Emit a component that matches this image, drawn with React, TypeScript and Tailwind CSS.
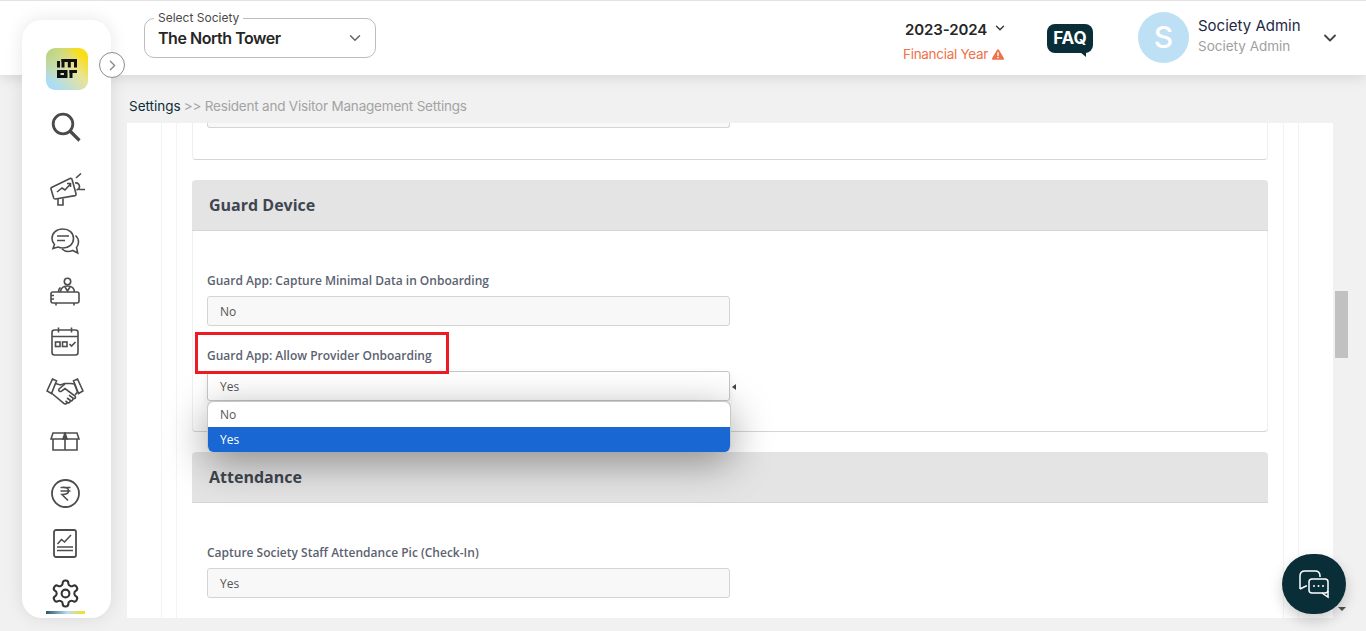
import { ChevronDown, ChevronRight } from "lucide-react";

const navIconClass = "fill-none stroke-[#4d4d4d] stroke-[1.6]";

function Logo() {
  return (
    <div className="flex h-[42px] w-[42px] items-center justify-center rounded-[9px] bg-[radial-gradient(circle_at_top_left,#b5d27d,transparent_55%),linear-gradient(45deg,#a9dcf8_12%,#e8e49a_58%,#f9de17_85%)]">
      <svg width="22" height="22" viewBox="0 0 22 22" fill="#111" fillRule="evenodd">
        <rect x="1" y="3" width="3" height="6.500" />
        <rect x="5.500" y="1" width="15.500" height="3" />
        <rect x="5.500" y="1" width="3" height="8.500" />
        <rect x="11.800" y="1" width="3" height="8.500" />
        <rect x="18" y="1" width="3" height="8.500" />
        <path d="M1 12h10.500v8H1zM4.500 15v2h3.500v-2z" />
        <rect x="13.500" y="12" width="7.500" height="3" />
        <rect x="13.500" y="12" width="3" height="8" />
      </svg>
    </div>
  );
}

function SearchIcon() {
  return (
    <svg width="30" height="30" viewBox="0 0 30 30" fill="none" stroke="#4a4a4a">
      <circle cx="12" cy="12" r="9.800" strokeWidth="2.800" />
      <path d="M19 19l9.500 9.500" strokeWidth="3.200" />
    </svg>
  );
}

function CampaignIcon() {
  return (
    <svg width="35" height="33" viewBox="0 0 35 33" className={navIconClass}>
      <path d="M1.500 14.500L20 5.500c1-.4 1.800 0 2 .8l4 14.500c.2 1-.2 1.600-1 1.800L5.500 26c-1 .2-1.400-.2-1.800-1L1 16c-.2-.7 0-1.200.5-1.500z" />
      <path d="M7 19l5-4 3 2 5-5.500M17 10.500h3.500v3.500" />
      <path d="M8 26v6h5v-6.500M25 10c3-.5 4.500 1.500 4.500 3.500s-1 3-3 3.500" />
      <path d="M26 5l5-4.500M29 16.500h6" />
    </svg>
  );
}

function ChatIcon() {
  return (
    <svg width="29" height="27" viewBox="0 0 29 27" className={navIconClass}>
      <path d="M12 1C5.500 1 1 5 1 10.500c0 2.500 1 4.500 2.500 6L2 20.500l5-1.500c1.500.7 3.200 1 5 1 6 0 10.500-4 10.500-9.500S18 1 12 1z" />
      <path d="M6 8h12M6 12.500h8" />
      <path d="M24.500 7.500c2 1.700 3 3.800 3 6.500 0 2-.7 4-2 5.500l1.200 5.500-5-2.500c-3.500 1.500-8 1-10.700-1.500" />
    </svg>
  );
}

function DeskIcon() {
  return (
    <svg width="30" height="29" viewBox="0 0 30 29" className={navIconClass}>
      <circle cx="17.500" cy="4.500" r="3.200" />
      <path d="M10.500 15c.3-4 3-6 7-6s6.700 2 7 6M15 10l2.500 4 2.500-4" />
      <path d="M8.500 15c0-2 .7-3.500 2-4.500" />
      <rect x="1" y="15" width="28" height="11" rx="2" />
      <path d="M1 18.500h3M1 22h3M6 26v2.500M24 26v2.500" />
    </svg>
  );
}

function CalendarIcon() {
  return (
    <svg width="28" height="29" viewBox="0 0 28 29" className={navIconClass}>
      <rect x="1" y="3" width="26" height="25" rx="2.500" />
      <path d="M1 9.500h26M7.500 0.500v5M20.500 0.500v5" />
      <rect x="4.500" y="15" width="4.500" height="4.500" />
      <rect x="11.500" y="15" width="4.500" height="4.500" />
      <path d="M18.500 17l2 2 4-4" />
    </svg>
  );
}

function HandshakeIcon() {
  return (
    <svg width="38" height="27" viewBox="0 0 38 27" className={navIconClass}>
      <path d="M1 13L6.500 1l4 1.800L5.500 15.500zM37 13L31.500 1l-4 1.800 5 12.700z" />
      <path d="M9.500 5.500l5 1.500 4-1.500h6l4 .5M28.500 6l3 8-2.500 3" />
      <path d="M19 6l-6 5c-1.200 1.500 1 3.200 2.500 2.200l3.500-2.700 10 7.500c1.500 1.500-.5 3.500-2 2.200l-4-3M26.500 20.500c1 1.500-.8 3-2 2l-3.500-2.500M24 22.800c.5 1.500-1 2.700-2.500 1.700l-2-1.500M21 25c-1 1.300-2.500 1-3.500.2L6 15.500" />
    </svg>
  );
}

function BoxIcon() {
  return (
    <svg width="30" height="19" viewBox="0 0 30 19" className={navIconClass}>
      <path d="M3 1h24l2 6H1zM3 7v11h24V7M15 1v17" />
      <path d="M15 1l-2 6h4z" fill="#4d4d4d" />
    </svg>
  );
}

function RupeeIcon() {
  return (
    <svg width="29" height="29" viewBox="0 0 29 29" className={navIconClass}>
      <circle cx="14.500" cy="14.500" r="13.500" strokeWidth="1.800" />
      <path d="M9.500 8.500h10M9.500 12h10M11 8.500c5-.5 6.500 1 6.500 3.500s-2.500 3.500-6.500 3.500l6 6" />
    </svg>
  );
}

function ReportIcon() {
  return (
    <svg width="24" height="29" viewBox="0 0 24 29" className={navIconClass}>
      <rect x="1" y="1" width="22" height="27" rx="2" strokeWidth="1.800" />
      <path d="M4.500 15l4-4.500 3 2.500 6.500-7M4 18h16M4 21.500h16" />
    </svg>
  );
}

function GearIcon() {
  return (
    <svg width="31" height="31" viewBox="0 0 24 24" fill="none" stroke="#333" strokeWidth="1.600" strokeLinejoin="round">
      <circle cx="12" cy="12" r="3" />
      <path d="M12.220 2h-.44a2 2 0 0 0-2 2v.18a2 2 0 0 1-1 1.730l-.43.250a2 2 0 0 1-2 0l-.150-.080a2 2 0 0 0-2.730.730l-.220.380a2 2 0 0 0 .730 2.730l.150.100a2 2 0 0 1 1 1.720v.510a2 2 0 0 1-1 1.740l-.150.090a2 2 0 0 0-.730 2.730l.220.380a2 2 0 0 0 2.730.730l.150-.080a2 2 0 0 1 2 0l.430.250a2 2 0 0 1 1 1.730V20a2 2 0 0 0 2 2h.44a2 2 0 0 0 2-2v-.18a2 2 0 0 1 1-1.730l.430-.250a2 2 0 0 1 2 0l.150.080a2 2 0 0 0 2.730-.730l.220-.390a2 2 0 0 0-.730-2.730l-.150-.080a2 2 0 0 1-1-1.740v-.500a2 2 0 0 1 1-1.740l.150-.090a2 2 0 0 0 .730-2.730l-.220-.380a2 2 0 0 0-2.730-.730l-.150.080a2 2 0 0 1-2 0l-.430-.250a2 2 0 0 1-1-1.730V4a2 2 0 0 0-2-2z" />
    </svg>
  );
}

function AlertIcon() {
  return (
    <svg width="12" height="11" viewBox="0 0 12 11" className="ml-[4px] mt-[1px]">
      <path d="M6 0.300c.4 0 .7.200.9.500l4.900 8.300c.4.700-.1 1.600-.9 1.600H1.100c-.8 0-1.300-.9-.9-1.600L5.100.800c.2-.3.5-.5.9-.5z" fill="#ef7049" />
      <rect x="5.300" y="3.200" width="1.400" height="3.800" fill="#fff" />
      <rect x="5.300" y="7.900" width="1.400" height="1.400" fill="#fff" />
    </svg>
  );
}

function ChatBubblesIcon() {
  return (
    <svg width="30" height="30" viewBox="0 0 30 30" fill="none" stroke="#fff" strokeWidth="1.500">
      <path d="M1 20V7c0-3 2-5 5-5h10c3 0 5 2 5 5v1" />
      <path d="M1 20l6-3h1" />
      <rect x="10" y="10" width="19" height="14" rx="3" />
      <path d="M29 22v6l-6-4" />
      <circle cx="15" cy="17" r="1" fill="#fff" stroke="none" />
      <circle cx="19.500" cy="17" r="1" fill="#fff" stroke="none" />
      <circle cx="24" cy="17" r="1" fill="#fff" stroke="none" />
    </svg>
  );
}

function NavSlot({ children }: { children: React.ReactNode }) {
  return <div className="flex h-[50px] items-center justify-center pr-[3px]">{children}</div>;
}

function Sidebar() {
  return (
    <aside className="absolute left-[22px] top-[20px] z-30 flex h-[598px] w-[89px] flex-col items-center rounded-[20px] bg-white pt-[28px] shadow-[0_0_18px_rgba(0,0,0,0.1)]">
      <Logo />
      <div className="mt-[22px] ml-[-1px] h-[30px]">
        <SearchIcon />
      </div>
      <div className="mt-[31px] ml-[2px] flex h-[33px] items-center">
        <CampaignIcon />
      </div>
      <div className="mt-[10px] w-full">
        <NavSlot><ChatIcon /></NavSlot>
        <NavSlot><DeskIcon /></NavSlot>
        <NavSlot><CalendarIcon /></NavSlot>
        <NavSlot><HandshakeIcon /></NavSlot>
        <NavSlot><BoxIcon /></NavSlot>
      </div>
      <div className="mt-[2px] w-full">
        <NavSlot><RupeeIcon /></NavSlot>
        <NavSlot><ReportIcon /></NavSlot>
        <NavSlot><GearIcon /></NavSlot>
      </div>
      <div className="mt-[-7px] ml-[-2px] h-[3px] w-[39px] bg-[linear-gradient(90deg,#2f5663,#b9dff2_55%,#f9de17)]" />
      <button className="absolute left-[77px] top-[32px] flex h-[26px] w-[26px] items-center justify-center rounded-full border border-[#8c8c8c] bg-white text-[#8c8c8c]">
        <ChevronRight size={17} strokeWidth={2} />
      </button>
    </aside>
  );
}

function Header() {
  return (
    <header className="relative z-20 flex h-[75px] items-start border-t border-[#e3e3e3] bg-white font-['Inter',sans-serif] shadow-[0_2px_14px_rgba(0,0,0,0.12)]">
      <div className="relative ml-[144px] mt-[17px] flex h-[40px] w-[232px] items-center justify-between rounded-[10px] border border-[#bdbdbd] pl-[13px] pr-[13px]">
        <span className="absolute left-[9px] top-[-8px] bg-white px-[4px] text-[12px] leading-[14px] text-[#4a4a4a]">
          Select Society
        </span>
        <span className="mt-[-1px] text-[16px] font-semibold leading-[20px] tracking-[-0.47px] text-[#262626]">The North Tower</span>
        <ChevronDown size={18} strokeWidth={2} className="mr-[-2px] text-[#666]" />
      </div>

      <div className="ml-[527px] mt-[18px] w-[110px]">
        <div className="flex h-[20px] items-center pt-[1px]">
          <span className="ml-[2px] text-[15px] font-semibold leading-[20px] tracking-[-0.1px] text-[#262626]">2023-2024</span>
          <ChevronDown size={14} strokeWidth={2.4} className="ml-[6px] mt-[-3px] text-[#333]" />
        </div>
        <div className="mt-[6px] flex items-center text-[13.500px] leading-[18px] tracking-[-0.3px] text-[#ef7049]">
          Financial Year
          <AlertIcon />
        </div>
      </div>

      <div className="relative ml-[34px] mt-[23px] flex h-[29px] w-[46px] items-center justify-center rounded-[8px] bg-[#0a2e38] text-[17px] font-bold text-white">
        FAQ
        <span className="absolute right-[7px] top-[28px] h-0 w-0 border-l-[6px] border-t-[5px] border-l-transparent border-t-[#0a2e38]" />
      </div>

      <div className="ml-[45px] mt-[11px] flex h-[51px] w-[51px] items-center justify-center rounded-full bg-[#bde0f5] text-[30px] font-medium text-white">
        S
      </div>
      <div className="ml-[9px] mt-[14px] w-[122px]">
        <div className="text-[15px] leading-[22px] text-[#1f2a44]">Society Admin</div>
        <div className="mt-[-1px] text-[13.500px] leading-[20px] text-[#a0a0a0]">Society Admin</div>
      </div>
      <ChevronDown size={20} strokeWidth={2.2} className="mt-[27px] text-[#444]" />
    </header>
  );
}

function ReadonlyField({ value }: { value: string }) {
  return (
    <div className="flex h-[30px] w-[523px] items-center rounded-[3px] border border-[#d4d4d4] bg-[#f8f8f8] pl-[12px] pt-[2px] text-[12px] text-[#555]">
      {value}
    </div>
  );
}

function FieldLabel({ children }: { children: React.ReactNode }) {
  return <div className="text-[12px] font-semibold leading-[16px] text-[#5b6270]">{children}</div>;
}

function SectionHeader({ title }: { title: string }) {
  return (
    <div className="flex h-[51px] items-center rounded-t-[4px] border-b border-[#d6d6d6] bg-[#e4e4e4] pl-[17px] text-[16px] font-bold text-[#3f4650]">
      {title}
    </div>
  );
}

function Panel() {
  return (
    <div className="relative ml-[127px] h-[495px] w-[1206px] overflow-hidden bg-white font-['Open_Sans',sans-serif]">
      {/* nested container edges behind the cards */}
      <div className="mx-[34px] h-[600px] border-x border-[#f3f3f3] px-[14px]">
        <div className="h-full border-x border-[#f3f3f3] px-[15px]">
          <div className="h-[37px] rounded-b-[4px] border-x border-b border-x-[#eeeeee] border-b-[#d6d6d6] pl-[14px]">
            <div className="h-[5px] w-[523px] rounded-b-[3px] border-x border-b border-[#d4d4d4] bg-[#f8f8f8]" />
          </div>

          <section className="mt-[20px] h-[252px] rounded-[4px] border-b border-[#d6d6d6] shadow-[inset_1px_0_0_#f0f0f0,inset_-1px_0_0_#f0f0f0]">
            <SectionHeader title="Guard Device" />
            <div className="pl-[15px] pt-[42px]">
              <FieldLabel>Guard App: Capture Minimal Data in Onboarding</FieldLabel>
              <div className="mt-[7px]">
                <ReadonlyField value="No" />
              </div>
              <div className="mt-[22px]">
                <FieldLabel>Guard App: Allow Provider Onboarding</FieldLabel>
              </div>
              <div className="relative mt-[7px] flex h-[30px] w-[523px] items-center rounded-[3px] border border-[#c6c6c6] bg-white pl-[12px] pt-[2px] text-[12px] text-[#555] shadow-[0_4px_8px_rgba(0,0,0,0.08)]">
                Yes
                <span className="absolute right-[-7px] top-[12px] h-0 w-0 border-y-[3px] border-r-[4px] border-y-transparent border-r-[#444]" />
              </div>
            </div>
          </section>

          <section className="mt-[20px] rounded-t-[4px]">
            <SectionHeader title="Attendance" />
            <div className="pl-[15px] pt-[42px]">
              <FieldLabel>Capture Society Staff Attendance Pic (Check-In)</FieldLabel>
              <div className="mt-[7px]">
                <ReadonlyField value="Yes" />
              </div>
            </div>
          </section>
        </div>
      </div>

      {/* annotation box over the label */}
      <div className="absolute left-[68px] top-[209px] h-[42px] w-[254px] border-[3px] border-[#ed1c24]" />

      {/* open select menu */}
      <div className="absolute left-[80px] top-[279px] z-10 w-[524px] overflow-hidden rounded-[6px] border-x border-[#c9c9c9] bg-white text-[12px] leading-[25px] text-[#555] shadow-[0_-1px_0_#c9c9c9,0_10px_40px_rgba(0,0,0,0.4)]">
        <div className="pl-[12px]">No</div>
        <div className="bg-[#1967d2] pl-[12px] text-white">Yes</div>
      </div>
    </div>
  );
}

export default function App() {
  return (
    <div className="relative h-[631px] w-[1366px] overflow-hidden bg-[#f1f1f1]">
      <Header />
      <Sidebar />

      <div className="flex h-[48px] items-end pb-[7px] pl-[129px] font-['Inter',sans-serif] text-[13.500px] leading-[20px] tracking-[-0.2px]">
        <span className="tracking-[0px] text-[#0a2e38]">Settings</span>
        <span className="ml-[3px] text-[#a3a3a3]">&gt;&gt; Resident and Visitor Management Settings</span>
      </div>

      <Panel />

      {/* scrollbar */}
      <div className="absolute left-[1335px] top-[291px] h-[67px] w-[13px] bg-[#c1c1c1]" />
      <span className="absolute left-[1338px] top-[607px] h-0 w-0 border-x-[4px] border-t-[4px] border-x-transparent border-t-[#505050]" />

      {/* floating chat button */}
      <button className="absolute left-[1282px] top-[554px] z-20 flex h-[60px] w-[64px] items-center justify-center rounded-full bg-[#0a2e38] shadow-[0_6px_14px_rgba(0,0,0,0.2)]">
        <ChatBubblesIcon />
      </button>
    </div>
  );
}
